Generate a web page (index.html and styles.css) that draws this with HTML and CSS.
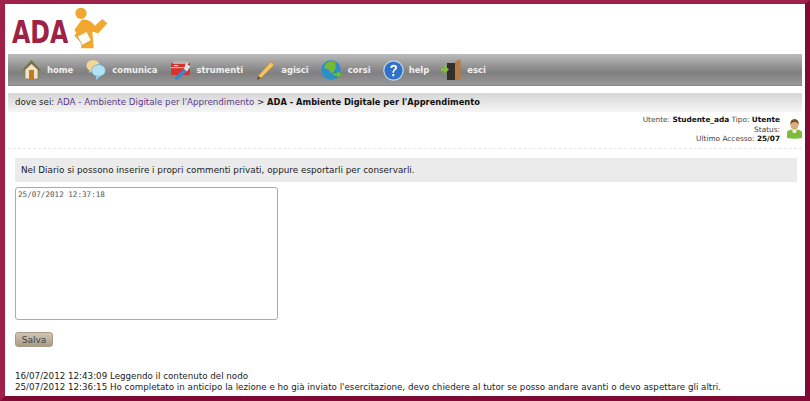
FILE: index.html
```html
<!DOCTYPE html>
<html lang="it">
<head>
<meta charset="utf-8">
<title>ADA - Diario</title>
<link rel="stylesheet" href="styles.css">
</head>
<body>
<div class="frame">
  <header class="logo-row">
    <span class="logo-text"><span class="logo-letters">ADA</span></span>
    <svg class="logo-man" width="45" height="45" viewBox="0 0 135 135">
      <circle cx="48" cy="25" r="17" fill="#f2a72e"/>
      <path d="M28 75 L50 44 Q65 42 78 50 L90 62 L112 42 L127 55 L100 85 L82 80 L86 130 L48 130 L50 115 L28 92 L34 84 Z" fill="#f2a72e"/>
      <path d="M37 94 L65 79 L79 106 L52 121 Z" fill="#fdfbf2" stroke="#d98e1e" stroke-width="2"/>
    </svg>
  </header>

  <nav class="menu">
    <a class="menu-item">
      <svg width="19" height="20" viewBox="0 0 19 20"><path d="M9.5 1 L18 10 L16 10 L16 19 L3 19 L3 10 L1 10 Z" fill="#efe4c8" stroke="#85754f" stroke-width=".7"/><path d="M9.5 0 L19 10.5 L16.5 10.5 L9.5 4 L2.5 10.5 L0 10.5 Z" fill="#7d6c44"/><rect x="7" y="10" width="5" height="9" fill="#c07a28"/></svg>
      <span class="menu-label">home</span>
    </a>
    <a class="menu-item">
      <svg width="20" height="22" viewBox="0 0 20 22"><ellipse cx="7" cy="6.5" rx="6.5" ry="5.5" fill="#f6d694"/><path d="M4 10 L3 14 L8 11 Z" fill="#f6d694"/><ellipse cx="12.5" cy="11.5" rx="7" ry="6" fill="#b2e0f5" stroke="#5aa8d0" stroke-width=".7"/><path d="M10 16.5 L10 21 L14.5 17 Z" fill="#8ccbea"/></svg>
      <span class="menu-label">comunica</span>
    </a>
    <a class="menu-item">
      <svg width="20" height="21" viewBox="0 0 20 21"><rect x="0" y="3" width="19" height="12" rx="1" fill="#d8322e"/><rect x="0" y="7" width="19" height="1.2" fill="#f3a09a"/><rect x="2" y="1" width="15" height="3" fill="#b8b2ac"/><rect x="3" y="5" width="4" height="1.2" fill="#fbe0dc"/><path d="M6 20 L3.5 18 L13 9 L16 11.5 Z" fill="#3f86c8"/><path d="M13 9 L14.5 4 L18 2 L16.5 5 L19.5 6 L16 11.5 Z" fill="#dfe7ee"/></svg>
      <span class="menu-label">strumenti</span>
    </a>
    <a class="menu-item narrow">
      <svg width="20" height="21" viewBox="0 0 20 21"><path d="M1 20 L2 16 L15 2 L18 5 L5 18 Z" fill="#f4c55a" stroke="#b8863a" stroke-width=".6"/><path d="M15 2 L16.5 1 L19 3.5 L18 5 Z" fill="#c89078"/><path d="M1 20 L2 16 L5 18 Z" fill="#5a4a30"/></svg>
      <span class="menu-label">agisci</span>
    </a>
    <a class="menu-item narrow">
      <svg width="22" height="21" viewBox="0 0 22 21"><circle cx="10" cy="10" r="9.8" fill="#2c8fc8"/><path d="M5 3 Q9 0 14 2 L15 8 L11 14 L7 9 L3 8 Z" fill="#78b838"/><path d="M12 13 L16 13 L16 10.5 L21.5 14.5 L16 18.5 L16 16 L12 16 Z" fill="#6cc040" stroke="#3a7a30" stroke-width=".4"/></svg>
      <span class="menu-label">corsi</span>
    </a>
    <a class="menu-item narrow">
      <svg width="21" height="21" viewBox="0 0 21 21"><circle cx="10.5" cy="10.5" r="9.7" fill="#2f72c8" stroke="#c0d8f2" stroke-width="1.2"/><path d="M7.3 8 Q7.5 4.7 10.7 4.7 Q14 4.8 14 7.6 Q14 9.4 12 10.6 Q11 11.3 11 12.8 L9.4 12.8 Q9.2 10.6 11 9.4 Q12.1 8.6 12 7.7 Q11.8 6.5 10.6 6.5 Q9.4 6.5 9.2 8 Z" fill="#fff"/><rect x="9.3" y="14" width="2" height="2.2" fill="#fff"/></svg>
      <span class="menu-label">help</span>
    </a>
    <a class="menu-item">
      <svg width="20" height="22" viewBox="0 0 20 22"><rect x="6" y="4" width="9" height="17" fill="#33302c"/><path d="M14 3 L19.5 0 L19.5 21 L14 21 Z" fill="#b87a40"/><path d="M0 9 L3 9 L3 6 L8 10.5 L3 15 L3 12 L0 12 Z" fill="#82c03a"/></svg>
      <span class="menu-label">esci</span>
    </a>
  </nav>

  <div class="crumbs">dove sei: <a class="crumb-link">ADA - Ambiente Digitale per l'Apprendimento</a> &gt; <strong>ADA - Ambiente Digitale per l'Apprendimento</strong></div>

  <section class="user-row">
    <div class="user-info">
      <div>Utente: <b>Studente_ada</b> Tipo: <b>Utente</b></div>
      <div>Status:</div>
      <div>Ultimo Accesso: <b>25/07</b></div>
    </div>
    <svg class="user-icon" width="15" height="20" viewBox="0 0 15 20"><ellipse cx="7.5" cy="6" rx="4" ry="5" fill="#dcae80"/><path d="M3.3 6 Q3 0 7.5 0 Q12 0 11.7 6 Q10.5 3 7.5 3 Q4.5 3 3.3 6 Z" fill="#7a5020"/><path d="M0 19 L0 13 Q1 11 5 10.5 L7.5 13 L10 10.5 Q14 11 15 13 L15 19 Q7.5 20.5 0 19 Z" fill="#80bc3c"/><path d="M5 10.5 L7.5 13 L10 10.5 L9 14 L6 14 Z" fill="#e8f4d8"/></svg>
  </section>

  <main class="content">
    <p class="notice">Nel Diario si possono inserire i propri commenti privati, oppure esportarli per conservarli.</p>
    <textarea class="diary">25/07/2012 12:37:18</textarea>
    <button class="save" type="button">Salva</button>
    <div class="log">
      <div>16/07/2012 12:43:09 Leggendo il contenuto del nodo</div>
      <div>25/07/2012 12:36:15 Ho completato in anticipo la lezione e ho già inviato l'esercitazione, devo chiedere al tutor se posso andare avanti o devo aspettare gli altri.</div>
    </div>
  </main>
</div>
</body>
</html>
```
FILE: styles.css
```css
html, body {
  margin: 0;
  padding: 0;
  height: 401px;
  overflow: hidden;
  background: #fff;
}
.frame {
  box-sizing: border-box;
  height: 401px;
  border-style: solid;
  border-width: 4px 5px 5px 5px;
  border-color: #9f2049 #7f0a34 #7f0a34 #9f2049;
  padding: 0 3px;
  font-family: "DejaVu Sans", Verdana, sans-serif;
  color: #222;
  overflow: hidden;
}
.logo-row {
  height: 50px;
  display: flex;
  align-items: flex-start;
}
.logo-text {
  display: block;
  width: 57px;
  margin: 16px 0 0 4px;
  height: 24px;
}
.logo-letters {
  display: inline-block;
  font-size: 32px;
  line-height: 24px;
  font-weight: bold;
  color: #9c2346;
  transform: scaleX(.74);
  transform-origin: left center;
}
.logo-man {
  margin: 1px 0 0 -4px;
}
.menu {
  height: 32px;
  display: flex;
  align-items: center;
  padding-left: 14px;
  background: linear-gradient(#bcbcbc, #8c8c8c 45%, #808080 60%, #989898 97%, #777);
}
.menu-item {
  display: flex;
  align-items: center;
  gap: 6px;
  margin-right: 13px;
}
.narrow {
  gap: 5px;
  margin-right: 12px;
}
.menu-label {
  font-size: 8.45px;
  font-weight: bold;
  color: #f0f0f0;
}
.crumbs {
  margin-top: 7px;
  height: 19px;
  line-height: 19px;
  padding-left: 7px;
  font-size: 8.7px;
  background: linear-gradient(#d6d6d6, #f5f5f5);
  color: #222;
}
.crumb-link {
  color: #5a3a8c;
}
.crumbs strong {
  font-size: 8.3px;
  color: #111;
}
.user-row {
  display: flex;
  justify-content: flex-end;
  align-items: flex-start;
  height: 37px;
  box-sizing: border-box;
  border-bottom: 1px dashed #e6e6e6;
  padding: 3px 0 0 0;
}
.user-info {
  font-size: 7.35px;
  line-height: 9.5px;
  text-align: right;
  color: #444;
  margin-right: 7px;
}
.user-info b {
  color: #111;
}
.user-icon {
  margin-top: 4px;
}
.content {
  padding: 9px 0 0 7px;
}
.notice {
  margin: 0 5px 0 0;
  height: 24px;
  line-height: 24px;
  padding-left: 6px;
  font-size: 8.82px;
  background: #ebebeb;
  color: #222;
}
.diary {
  display: block;
  box-sizing: border-box;
  width: 263px;
  height: 133px;
  margin: 5px 0 0 0;
  padding: 2px;
  border: 1px solid #b5ab94;
  border-radius: 3px;
  background: #fff;
  font-family: "DejaVu Sans Mono", monospace;
  font-size: 7.6px;
  color: #555;
  resize: none;
  outline: none;
}
.save {
  display: block;
  width: 38px;
  height: 15px;
  margin: 12px 0 0 0;
  padding: 0;
  border: 1px solid #a89c84;
  border-radius: 3px;
  background: linear-gradient(#cfc6b4, #a89c84);
  font-family: "DejaVu Sans", sans-serif;
  font-size: 9px;
  color: #444;
}
.log {
  margin-top: 24px;
  font-size: 8.73px;
  line-height: 11px;
  color: #222;
  white-space: nowrap;
}
```
